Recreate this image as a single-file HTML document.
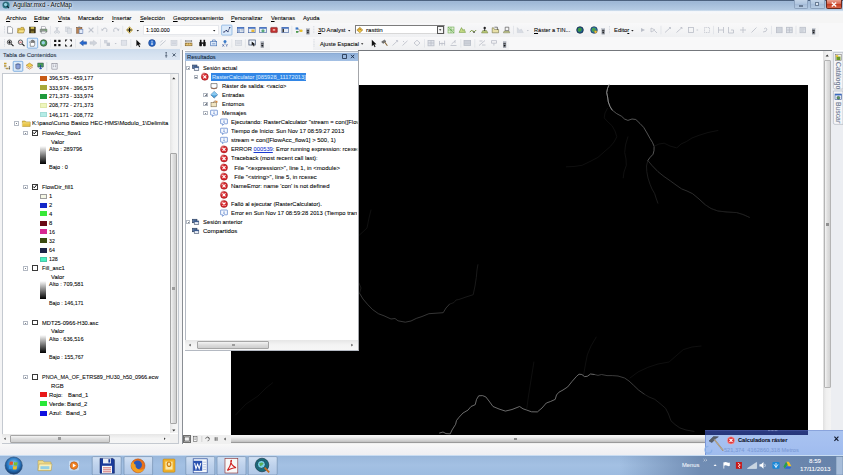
<!DOCTYPE html>
<html>
<head>
<meta charset="utf-8">
<title>Aguilar.mxd - ArcMap</title>
<style>
html,body{margin:0;padding:0;}
body{width:843px;height:475px;overflow:hidden;position:relative;background:#f0f0f0;font-family:"Liberation Sans",sans-serif;font-size:6.2px;color:#000;}
.a{position:absolute;}
.t{position:absolute;white-space:nowrap;line-height:8px;height:8px;letter-spacing:0;-webkit-text-stroke:0.07px currentColor;}
.g{color:#9aa0a8;}
u{text-decoration:underline;text-decoration-thickness:0.45px;text-underline-offset:0.5px;}
svg{position:absolute;overflow:visible;}
.sw{position:absolute;width:7.5px;height:5px;}
.cb{position:absolute;width:5.6px;height:5.5px;border:0.6px solid #3a3a3a;background:#fff;box-sizing:border-box;}
.ex{position:absolute;width:4.6px;height:4.6px;border:0.6px solid #b4bac4;background:#fff;box-sizing:border-box;}
.ex:after{content:"";position:absolute;left:0.7px;right:0.7px;top:1.4px;height:0.6px;background:#7a8088;}
.ex.pl:before{content:"";position:absolute;top:0.7px;bottom:0.7px;left:1.4px;width:0.6px;background:#7a8088;}
.gr{position:absolute;width:6px;background:linear-gradient(#fff,#000);}
</style>
</head>
<body>

<!-- ===== TITLE BAR ===== -->
<div class="a" id="titlebar" style="left:0;top:0;width:843px;height:11px;background:linear-gradient(#4a5f7c 0,#4d6380 6%,#a6bdd9 10%,#9db7d5 16%,#b6cce4 92%,#e4edf6 100%);"></div>
<div class="t" id="title" style="transform-origin:0 50%;transform:scaleX(0.941);left:13px;top:1px;font-size:6.6px;color:#0c1420;text-shadow:0 0 1.5px rgba(255,255,255,.95),0 0 3px rgba(255,255,255,.8),0 0 4px rgba(255,255,255,.6);">Aguilar.mxd - ArcMap</div>

<!-- ===== MENU BAR ===== -->
<div class="a" id="menubar" style="left:0;top:11px;width:843px;height:12px;background:linear-gradient(#f1f5fa 0,#f7f8fa 12%,#f5f5f5 30%,#f5f5f5 100%);"></div>


<!-- menu items -->
<div class="t" id="m1" style="transform-origin:0 50%;transform:scaleX(0.993);left:6.2px;top:13.5px;"><u>A</u>rchivo</div>
<div class="t" id="m2" style="transform-origin:0 50%;transform:scaleX(0.964);left:34.4px;top:13.5px;"><u>E</u>ditar</div>
<div class="t" id="m3" style="transform-origin:0 50%;transform:scaleX(0.894);left:57.8px;top:13.5px;"><u>V</u>ista</div>
<div class="t" id="m4" style="transform-origin:0 50%;transform:scaleX(0.972);left:78.2px;top:13.5px;">Marcador</div>
<div class="t" id="m5" style="transform-origin:0 50%;transform:scaleX(0.929);left:112px;top:13.5px;"><u>I</u>nsertar</div>
<div class="t" id="m6" style="transform-origin:0 50%;transform:scaleX(0.928);left:139.5px;top:13.5px;"><u>S</u>elección</div>
<div class="t" id="m7" style="transform-origin:0 50%;transform:scaleX(0.964);left:172.6px;top:13.5px;"><u>G</u>eoprocesamiento</div>
<div class="t" id="m8" style="transform-origin:0 50%;transform:scaleX(0.910);left:231px;top:13.5px;"><u>P</u>ersonalizar</div>
<div class="t" id="m9" style="transform-origin:0 50%;transform:scaleX(0.937);left:270.5px;top:13.5px;"><u>V</u>entanas</div>
<div class="t" id="m10" style="transform-origin:0 50%;transform:scaleX(0.952);left:303px;top:13.5px;">Ayuda</div>

<!-- window buttons -->
<div class="a" style="left:793.5px;top:0;width:14.5px;height:8.5px;border:0.6px solid #8da3bf;border-top:0;border-radius:0 0 2px 2px;box-sizing:border-box;background:linear-gradient(#c4d5e9,#afc5df 50%,#a3bbd8 51%,#b8cce3);"></div>
<div class="a" style="left:798.5px;top:4.6px;width:4.5px;height:1.6px;background:#f4f8fc;border:0.4px solid #6a7d96;box-sizing:border-box;"></div>
<div class="a" style="left:809.5px;top:0;width:15px;height:8.5px;border:0.6px solid #8da3bf;border-top:0;border-radius:0 0 2px 2px;box-sizing:border-box;background:linear-gradient(#c4d5e9,#afc5df 50%,#a3bbd8 51%,#b8cce3);"></div>
<div class="a" style="left:814.5px;top:2.2px;width:4.6px;height:3.8px;border:0.7px solid #6a7d96;box-sizing:border-box;background:rgba(255,255,255,.6);"></div>
<div class="a" style="left:825.5px;top:0;width:16.5px;height:8.5px;border:0.6px solid #6a2a20;border-top:0;border-radius:0 0 2px 2px;box-sizing:border-box;background:linear-gradient(#e8a393,#d7614a 50%,#c43a20 51%,#d9674a);"></div>
<svg style="left:831px;top:1.8px;" width="6" height="5" viewBox="0 0 6 5"><path d="M0.8 0.5 L5.2 4.5 M5.2 0.5 L0.8 4.5" stroke="#fff" stroke-width="1.3"/></svg>
<!-- app icon -->
<svg style="left:1.5px;top:1.2px;" width="8" height="8" viewBox="0 0 8 8"><circle cx="4" cy="4" r="3.6" fill="#2f7d8c"/><circle cx="3.6" cy="3.6" r="2.1" fill="#8fd0e0" stroke="#134" stroke-width="0.6"/><path d="M5 5 L7 7.2" stroke="#123" stroke-width="1.1"/></svg>

<!-- ===== TOOLBARS ===== -->
<div class="a" id="toolbars" style="left:0;top:23px;width:843px;height:27px;background:#f8f8f9;"></div>


<!-- toolbar subtle bands -->
<div class="a" style="left:0;top:23px;width:612px;height:14px;background:linear-gradient(#f8f8f9,#eff0f2);"></div>
<div class="a" style="left:609px;top:24px;width:210px;height:12.5px;background:linear-gradient(#f8f8f9,#eff0f2);border-radius:1.5px;"></div>
<div class="a" style="left:0;top:37px;width:270px;height:13px;background:linear-gradient(#f8f8f9,#eff0f2);"></div>
<div class="a" style="left:313px;top:37px;width:196px;height:13px;background:linear-gradient(#f8f8f9,#eff0f2);"></div>
<div class="a" style="left:358px;top:49.8px;width:473.5px;height:0.95px;background:#74777c;z-index:3;"></div>

<!-- combos -->
<div class="a" style="left:142.5px;top:25.3px;width:76px;height:9.6px;background:#fff;border:0.5px solid #e6e8ec;box-sizing:border-box;"></div>
<div class="t" id="scaletxt" style="transform-origin:0 50%;transform:scaleX(0.861);left:145.7px;top:26.3px;">1:100.000</div>
<div class="a" style="left:355px;top:24.6px;width:89.6px;height:9.8px;background:#fff;border:0.8px solid #7c7c7c;border-right-color:#d8d8d8;border-bottom-color:#d8d8d8;box-sizing:border-box;"></div>
<div class="a" style="left:436.8px;top:25.6px;width:6.8px;height:8px;background:#f4f4f4;border:0.6px solid #555;box-sizing:border-box;"></div>
<div class="t" id="rasttin" style="transform-origin:0 50%;transform:scaleX(0.997);left:366.2px;top:26.3px;">rasttin</div>
<div class="t" id="an3d" style="transform-origin:0 50%;transform:scaleX(0.926);left:318.3px;top:26.3px;"><u>3</u>D Analyst</div>
<div class="t" id="rtin" style="transform-origin:0 50%;transform:scaleX(0.902);left:533.8px;top:26.3px;"><u>R</u>áster a TIN...</div>
<div class="t" id="editor" style="transform-origin:0 50%;transform:scaleX(0.946);left:613.5px;top:26.3px;">Edito<u>r</u></div>
<div class="t" id="ajuste" style="transform-origin:0 50%;transform:scaleX(0.922);left:320.3px;top:39.6px;">Ajuste Espacial</div>

<svg id="tbsvg" style="left:0;top:0;" width="843" height="475" viewBox="0 0 843 475">
<defs>
<g id="ovf"><rect x="-1.6" y="-3" width="3.2" height="6.4" fill="#8a8f98"/><rect x="-1.6" y="-3" width="3.2" height="1.2" fill="#c8ccd4"/><path d="M-1.1 0.8 L1.1 0.8 L0 2.4 Z" fill="#111"/><rect x="-1.1" y="-0.8" width="2.2" height="0.6" fill="#111"/></g>
<g id="dd"><path d="M-1.2 -0.6 L1.2 -0.6 L0 0.9 Z" fill="#222"/></g>
<g id="grip"><path d="M0 -4 V4" stroke="#c6ccd6" stroke-width="0.8" stroke-dasharray="0.8 0.8"/></g>
<g id="sep"><path d="M0 -4.2 V4.2" stroke="#d9dce2" stroke-width="0.6"/></g>
<g id="mag"><circle cx="-0.8" cy="-0.8" r="2.2" fill="#f6f8fb" stroke="#333" stroke-width="0.8"/><path d="M0.9 0.9 L3.2 3.2" stroke="#222" stroke-width="1.2"/></g>
<g id="globe"><circle r="3.3" fill="#1f5f9a" stroke="#0a1a2a" stroke-width="0.7"/><path d="M-2 -1.5 Q0 -3 1.5 -1.5 Q2.5 0.5 0.5 1.5 Q-1.5 2.5 -2.2 0.5 Z" fill="#3f9a3f"/></g>
<g id="gray1"><rect x="-2.8" y="-2.8" width="5.6" height="5.6" fill="#d4d8e0" stroke="#bcc2cc" stroke-width="0.5"/></g>
<g id="gray2"><path d="M-2.8 2.5 L2.8 -2.5 M-2.8 -0.5 L-0.5 -2.8" stroke="#c0c5ce" stroke-width="0.9" fill="none"/></g>
<g id="win"><rect x="-3.3" y="-2.7" width="6.6" height="5.4" fill="#e8eef8" stroke="#3a5a9a" stroke-width="0.6"/><rect x="-3.3" y="-2.7" width="6.6" height="1.4" fill="#3a6ac0"/></g>
</defs>

<!-- ROW 1 -->
<use href="#grip" x="4.5" y="30"/>
<g transform="translate(10,30)"><path d="M-2.4 -3.3 H1 L2.5 -1.8 V3.3 H-2.4 Z" fill="#fff" stroke="#6a6f78" stroke-width="0.6"/></g>
<g transform="translate(21,30)"><path d="M-3.3 -1.6 H-0.6 L0 -2.6 H2.6 V-1.2 H3.4 L2.6 2.8 H-3.3 Z" fill="#e9c84c" stroke="#8b6d18" stroke-width="0.5"/><path d="M-3.3 2.8 L-2.2 -0.2 H3.6 L2.6 2.8 Z" fill="#f7e28a" stroke="#8b6d18" stroke-width="0.4"/></g>
<g transform="translate(32.4,30)"><rect x="-3" y="-3" width="6" height="6" fill="#3d3210" stroke="#221b05" stroke-width="0.4"/><rect x="-1.8" y="-3" width="3.6" height="2.2" fill="#c9b44a"/><rect x="-1.6" y="0.6" width="3.2" height="2.4" fill="#7a6a28"/></g>
<g transform="translate(43.6,30)"><rect x="-2" y="-3.2" width="4" height="2.6" fill="#fff" stroke="#667" stroke-width="0.4"/><rect x="-3.4" y="-1" width="6.8" height="3.2" rx="0.6" fill="#8d9b8e" stroke="#4a564c" stroke-width="0.4"/><rect x="-2.2" y="1.2" width="4.4" height="2" fill="#e8ece8" stroke="#667" stroke-width="0.3"/><circle cx="2.2" cy="0" r="0.5" fill="#4c4"/></g>
<use href="#sep" x="50.5" y="30"/>
<g transform="translate(57,30)" stroke="#c2c7d0" stroke-width="0.9" fill="none"><path d="M-1.2 -3 L1 1 M1.2 -3 L-1 1"/><circle cx="-1.5" cy="2.2" r="1"/><circle cx="1.5" cy="2.2" r="1"/></g>
<g transform="translate(68.5,30)"><rect x="-2.8" y="-3" width="3.8" height="4.6" fill="#dde0e6" stroke="#c2c7d0" stroke-width="0.5"/><rect x="-0.8" y="-1.4" width="3.8" height="4.6" fill="#dde0e6" stroke="#c2c7d0" stroke-width="0.5"/></g>
<g transform="translate(79.7,30)"><rect x="-3" y="-2.6" width="5.2" height="5.8" fill="#b98252" stroke="#6e4524" stroke-width="0.5"/><rect x="-1.4" y="-3.4" width="2" height="1.4" fill="#7b7f88"/><rect x="-0.6" y="-0.8" width="3.8" height="4.2" fill="#e4ecfa" stroke="#4a6fb0" stroke-width="0.5"/></g>
<g transform="translate(91,30)"><path d="M-2.4 -2.4 L2.4 2.4 M2.4 -2.4 L-2.4 2.4" stroke="#bfc4cd" stroke-width="1.2"/></g>
<use href="#sep" x="97.7" y="30"/>
<g transform="translate(104.6,30)"><path d="M-2.4 0 Q-1 -2.8 1.4 -1.8 Q3 -0.6 2 2" fill="none" stroke="#c2c7d0" stroke-width="1"/><path d="M-3.4 -1.6 L-2.8 1.2 L-0.6 -0.2 Z" fill="#c2c7d0"/></g>
<g transform="translate(116,30)"><path d="M2.4 0 Q1 -2.8 -1.4 -1.8 Q-3 -0.6 -2 2" fill="none" stroke="#c2c7d0" stroke-width="1"/><path d="M3.4 -1.6 L2.8 1.2 L0.6 -0.2 Z" fill="#c2c7d0"/></g>
<use href="#sep" x="122.7" y="30"/>
<g transform="translate(129.5,30)"><path d="M0 -3.4 L3.4 0 L0 3.4 L-3.4 0 Z" fill="#f6e08a" stroke="#b89a40" stroke-width="0.5"/><path d="M0 -2.3 V2.3 M-2.3 0 H2.3" stroke="#111" stroke-width="1.15"/></g>
<use href="#dd" x="137.8" y="30.5"/>
<use href="#dd" x="214.2" y="30.5"/>
<!-- editor-toolbar toggle (highlighted) -->
<rect x="221.6" y="25.1" width="10.4" height="10" rx="0.8" fill="#dbeafa" stroke="#6aa0d8" stroke-width="0.6"/>
<g transform="translate(226.8,30)"><path d="M-3 2 L-0.5 0.5 L1 1.5 L3 -2.4" stroke="#334" stroke-width="0.6" fill="none"/><g fill="#1a2a6a"><rect x="-3.4" y="1.5" width="1.1" height="1.1"/><rect x="-1" y="0" width="1.1" height="1.1"/><rect x="0.6" y="1" width="1.1" height="1.1"/><rect x="2.4" y="-3" width="1.1" height="1.1"/></g></g>
<use href="#win" x="240.6" y="30"/><g transform="translate(240.6,30)"><rect x="-2.6" y="-0.8" width="2" height="2.8" fill="#9ab4dc"/><path d="M0 -0.4 H2.6 M0 0.8 H2.6" stroke="#7a8aa0" stroke-width="0.4"/></g>
<use href="#win" x="251.8" y="30"/><g transform="translate(251.8,30)"><rect x="-0.4" y="-0.4" width="3" height="2.4" fill="#e8b838"/></g>
<use href="#win" x="263" y="30"/><g transform="translate(263,30)"><circle cx="0" cy="0.8" r="1.6" fill="#58a878"/></g>
<g transform="translate(274,30)"><rect x="-3.3" y="-2.6" width="6.6" height="5.2" rx="0.6" fill="#c23030" stroke="#6a1010" stroke-width="0.5"/><rect x="-1.2" y="-0.8" width="2.4" height="1.4" fill="#f0d0c0"/></g>
<use href="#win" x="285.2" y="30"/><g transform="translate(285.2,30)"><rect x="-2.7" y="-1.2" width="1.4" height="3.4" fill="#222"/></g>
<use href="#sep" x="291.8" y="30"/>
<g transform="translate(299,30)"><rect x="-3.4" y="-2.6" width="2.6" height="2.2" fill="#3a78c8"/><rect x="0.6" y="-0.4" width="3" height="2.4" rx="1" fill="#e8c030"/><rect x="-3" y="1" width="2.2" height="1.8" fill="#4a9a4a"/><path d="M-0.8 -1.5 L0.6 0.4 M-0.8 1.8 L0.6 1" stroke="#234" stroke-width="0.5"/></g>
<use href="#ovf" x="307.9" y="31"/>
<use href="#grip" x="313.8" y="30"/>
<use href="#dd" x="349.2" y="30.5"/>
<g transform="translate(359.8,30)"><path d="M0 -2.8 L3 0 L0 2.8 L-3 0 Z" fill="#f0c848" stroke="#8a6410" stroke-width="0.5"/><path d="M-1.6 0.4 L0 -1.4 L1.6 0.4" stroke="#8a4a10" stroke-width="0.6" fill="none"/></g>
<use href="#dd" x="440.2" y="29.8"/>
<g transform="translate(451,30)"><rect x="-3" y="-3" width="6" height="6" fill="#dff0d0" stroke="#5a9a3a" stroke-width="0.5"/><path d="M-3 0 H3 M0 -3 V3 M-3 -3 L3 3" stroke="#4a9a3a" stroke-width="0.5"/></g>
<g transform="translate(462.3,30)"><path d="M-3.2 2.4 L-0.8 -2.4 L0.8 0.6 L1.8 -0.8 L3.2 2.4 Z" fill="#c8dc88" stroke="#5a8a2a" stroke-width="0.5"/></g>
<g transform="translate(473,30.6)"><path d="M-3.2 1.6 Q-1.6 -1.4 0 0.6 Q1.6 2 3.2 -0.6" fill="none" stroke="#6a8a2a" stroke-width="0.9"/><circle cx="1" cy="1.6" r="0.8" fill="#333"/></g>
<g transform="translate(484.7,30)"><path d="M-3.2 3 H3.2 L2 0.6 H-2 Z" fill="#b8c878" stroke="#5a6a2a" stroke-width="0.4"/><circle cx="0" cy="-2" r="1.2" fill="#222"/><path d="M0 -1 V1" stroke="#222" stroke-width="0.8"/></g>
<g transform="translate(495.4,30)"><path d="M-3.2 2.8 H3.2 L3.2 -0.6 H-1 L-1.8 -2.2 H-3.2 Z" fill="#e8e0a8" stroke="#5a5a2a" stroke-width="0.5"/><path d="M-1 -2.8 H2 V0" stroke="#333" stroke-width="0.6" fill="none"/></g>
<g transform="translate(506.6,30)"><path d="M-3.2 2.8 H3.2 L2.4 1 H-2.4 Z" fill="#c8d098" stroke="#5a5a2a" stroke-width="0.4"/><path d="M-1.4 -2.8 H2.2 V0.6 H-1.4 Z" fill="#f4f4f4" stroke="#444" stroke-width="0.6"/></g>
<use href="#sep" x="513.5" y="30"/>
<g transform="translate(520.3,30)"><path d="M-3 2.6 V-2.4 L-0.6 0.2 L1 -1 L3 2.6 Z" fill="#d8dce4" stroke="#c2c7d0" stroke-width="0.4"/></g>
<g transform="translate(527.8,30.5)"><path d="M-1 -0.5 L1 -0.5 L0 0.8 Z" fill="#b8bdc6"/></g>
<use href="#globe" x="580" y="30"/>
<g transform="translate(594,30)"><circle r="3.3" fill="#2a78b8" stroke="#0a1a2a" stroke-width="0.6"/><path d="M-2 -1.5 Q0 -3 1.5 -1.5 Q2.5 0.5 0.5 1.5 Q-1.5 2.5 -2.2 0.5 Z" fill="#4aa04a"/><circle cx="1.6" cy="1.8" r="1.4" fill="#f0c030" stroke="#654" stroke-width="0.3"/></g>
<use href="#ovf" x="603.2" y="31"/>
<use href="#dd" x="632.4" y="30.5"/>
<g stroke="#babec8" fill="none" stroke-width="0.8">
<path d="M641 28 L645 30 L641 32 Z" fill="#babec8" stroke="none"/>
<path d="M651 28 L655 30 L651 32 Z M655 31 L657 33" />
<path d="M665 32.5 L670.5 27.5 M669 27.5 h1.5 v1.5"/>
<path d="M676.5 32.5 L682 27.5 M680.5 27.5 h1.5 v1.5"/>
<rect x="688.5" y="27.5" width="5" height="5"/><path d="M696.5 30 h1.6"/>
<rect x="704.5" y="27.5" width="5" height="5" stroke-dasharray="1 0.8"/>
<path d="M718.5 27 v6 M723.5 27 v6 M718.5 30 h5"/>
<path d="M728.5 27 v6 h5 v-3 h-2.5"/>
<path d="M740 30 h6 M743 27 v6"/>
<path d="M751.5 32.5 L756.5 27.5"/>
<path d="M763 32 q4 0 4 -3 q-1 -2 -3 0"/>
<rect x="776.5" y="27.3" width="5.6" height="5.4" fill="#dde1e8"/><path d="M776.5 29 h5.6 M776.5 31 h5.6"/>
<rect x="786.6" y="27.3" width="5.6" height="5.4" fill="#dde1e8"/><path d="M789.4 27.3 v5.4 M786.6 30 h5.6"/>
<rect x="800" y="27.3" width="5.6" height="5.4" fill="#dde1e8"/><path d="M801 29 h3.6 M801 31 h2.6"/>
</g>
<use href="#sep" x="661" y="30"/><use href="#sep" x="713.5" y="30"/><use href="#sep" x="771.5" y="30"/><use href="#sep" x="796" y="30"/>
<use href="#ovf" x="813.6" y="31"/>
<use href="#grip" x="609.5" y="30"/>

<!-- ROW 2 -->
<use href="#grip" x="4.5" y="43.3"/>
<use href="#mag" x="10.3" y="43"/><path d="M8 42.2 h3 M9.5 40.7 v3" stroke="#111" stroke-width="0.9"/>
<use href="#mag" x="21.3" y="43"/><path d="M19.3 42.2 h2.4" stroke="#b22" stroke-width="0.8"/>
<rect x="27.3" y="38.2" width="10.4" height="10" rx="0.8" fill="#e4effb" stroke="#5a98d8" stroke-width="0.7"/>
<g transform="translate(32.5,43.3)"><path d="M-2.2 3 V0 L-3 -1.4 L-2.2 -1.8 L-1.2 -0.4 V-2.8 H-0.4 V-0.6 V-3.2 H0.5 V-0.6 V-2.8 H1.4 V-0.4 V-2 H2.2 V1.4 L1.6 3 Z" fill="#fff" stroke="#444" stroke-width="0.5"/></g>
<g transform="translate(43.6,43)"><circle r="3.3" fill="#4a9a5a" stroke="#1a3a2a" stroke-width="0.6"/><circle r="1.7" cx="-0.3" cy="-0.3" fill="#9ad0e8"/></g>
<use href="#sep" x="50.5" y="43.3"/>
<g transform="translate(57.3,43)" fill="#111"><rect x="-3.2" y="-3.2" width="2.2" height="2.2"/><rect x="1" y="-3.2" width="2.2" height="2.2"/><rect x="-3.2" y="1" width="2.2" height="2.2"/><rect x="1" y="1" width="2.2" height="2.2"/></g>
<g transform="translate(68.5,43)" fill="#111"><path d="M-3.4 -3.4 h2.4 l-2.4 2.4 Z M3.4 -3.4 v2.4 l-2.4 -2.4 Z M-3.4 3.4 v-2.4 l2.4 2.4 Z M3.4 3.4 h-2.4 l2.4 -2.4 Z"/></g>
<use href="#sep" x="75.5" y="43.3"/>
<path d="M79.6 43 L83.2 40.2 V41.8 H86.6 V44.2 H83.2 V45.8 Z" fill="#2a6ad0" stroke="#103a80" stroke-width="0.4"/>
<path d="M97 43 L93.4 40.2 V41.8 H90 V44.2 H93.4 V45.8 Z" fill="#d0d4dc" stroke="#b8bdc6" stroke-width="0.4"/>
<use href="#sep" x="100.5" y="43.3"/>
<g transform="translate(107,43)"><rect x="-3" y="-3" width="3.4" height="3.4" fill="#d0d4dc"/><rect x="-0.4" y="-0.4" width="3.4" height="3.4" fill="#c2c7d0"/></g>
<g transform="translate(115.7,43.5)"><path d="M-1 -0.5 L1 -0.5 L0 0.8 Z" fill="#b8bdc6"/></g>
<g transform="translate(124,43)"><rect x="-2.8" y="-2.8" width="5.6" height="5" fill="#e0e3ea" stroke="#c2c7d0" stroke-width="0.5"/></g>
<use href="#sep" x="130.8" y="43.3"/>
<path d="M136.4 39.8 V46.2 L138 44.8 L139.2 47.2 L140.2 46.7 L139 44.4 L141 44.2 Z" fill="#111"/>
<g transform="translate(152,43)"><circle r="3.4" fill="#2a6ac8" stroke="#0a2a70" stroke-width="0.5"/><path d="M0 -0.6 V2 M0 -2.2 v0.9" stroke="#fff" stroke-width="1.1"/></g>
<use href="#gray2" x="163" y="43"/>
<g transform="translate(174,43)"><rect x="-3" y="-2.6" width="6" height="5.2" fill="#dde1e8" stroke="#c2c7d0" stroke-width="0.5"/><path d="M-2 -1 h4 M-2 0.6 h4" stroke="#c2c7d0" stroke-width="0.5"/></g>
<use href="#sep" x="181" y="43.3"/>
<g transform="translate(188.6,43)"><rect x="-3.4" y="0" width="6.8" height="2.8" fill="#e8c878" stroke="#6a4a10" stroke-width="0.5"/><path d="M-2 0 v1.2 M0 0 v1.6 M2 0 v1.2" stroke="#6a4a10" stroke-width="0.4"/><path d="M-3 -2 h6" stroke="#222" stroke-width="0.6"/><path d="M-3 -2.8 v1.6 M3 -2.8 v1.6" stroke="#222" stroke-width="0.5"/></g>
<g transform="translate(202.5,43)" fill="#111"><rect x="-3.2" y="-1" width="2.6" height="4.2" rx="0.6"/><rect x="0.6" y="-1" width="2.6" height="4.2" rx="0.6"/><rect x="-2.6" y="-3.2" width="1.6" height="2.4"/><rect x="1" y="-3.2" width="1.6" height="2.4"/><rect x="-0.8" y="-0.6" width="1.6" height="1.4"/></g>
<g transform="translate(213.7,43)"><rect x="-3" y="-1.4" width="6" height="4.2" fill="#dce8f8" stroke="#3a6ab0" stroke-width="0.6"/><path d="M-1.2 -1.4 V-3 H1.6 V-1.4" fill="none" stroke="#3a6ab0" stroke-width="0.6"/><path d="M-1.6 0.8 h3.2" stroke="#3a6ab0" stroke-width="0.6"/></g>
<g transform="translate(225,43)"><circle cx="0" cy="-1.6" r="1.5" fill="#3a7ac8"/><path d="M0 -0.4 V1" stroke="#3a7ac8" stroke-width="0.7"/><path d="M-2.6 1.2 l1.8 2.4 M-0.8 1.2 l-1.8 2.4 M0.8 1.2 l0.9 1.2 l0.9 -1.2 M1.7 2.4 v1.2" stroke="#1a3a8a" stroke-width="0.55" fill="none"/></g>
<use href="#sep" x="231.8" y="43.3"/>
<g transform="translate(238.6,43)"><rect x="-3.2" y="-2.6" width="6.4" height="5.2" fill="#e2e5eb" stroke="#c2c7d0" stroke-width="0.5"/><path d="M-2 -1 h4 M-2 0.4 h4" stroke="#c8ccd4" stroke-width="0.5"/></g>
<use href="#sep" x="245.4" y="43.3"/>
<g transform="translate(252.3,43)"><rect x="-3.4" y="-3" width="6.4" height="5" fill="#eef4fc" stroke="#3a4a6a" stroke-width="0.7"/><path d="M-0.6 -1.6 V2.6 L0.6 1.6 L1.4 3.4 L2.2 3 L1.4 1.4 L2.8 1.2 Z" fill="#111"/></g>
<use href="#ovf" x="262.3" y="44.3"/>
<use href="#grip" x="314" y="43.3"/>
<use href="#dd" x="362.2" y="43.8"/>
<path d="M371.8 39.8 V46.2 L373.4 44.8 L374.6 47.2 L375.6 46.7 L374.4 44.4 L376.4 44.2 Z" fill="#111"/>
<g transform="translate(384.4,43)"><path d="M-2.8 -1.2 L0.2 -3 L1.6 -1.6 L-1.4 0.4 Z" fill="#777" stroke="#333" stroke-width="0.4"/><path d="M0.4 -0.8 L3 2.8" stroke="#8a6a3a" stroke-width="1.1"/></g>
<g stroke="#babec8" fill="none" stroke-width="0.8">
<path d="M392.5 45.5 L397.5 40.8"/><path d="M396 40.5 h1.6 v1.6"/>
<path d="M402.5 45.5 L407.5 40.8 M403 41 l1.2 1.2"/>
<path d="M414 43 l3 -2.8 l3 2.8 l-3 2.8 Z"/>
<use href="#sep" x="424.5" y="43.3"/>
<rect x="428" y="40.4" width="6" height="5.4" fill="#e0e3ea"/><path d="M431 40.4 v5.4 M428 43 h6"/>
<path d="M439.5 45.6 v-4.6 M442 45.6 v-3 M444.6 45.6 v-5"/><path d="M439 43.5 h6"/>
<path d="M450.5 45.5 h6 M451.5 44 l4 -3.5 M455 40.5 v2.6"/>
<use href="#sep" x="460.8" y="43.3"/>
<rect x="464" y="40.4" width="6.6" height="5" fill="#d6dae2"/><path d="M464 42 h6.6 M464 43.8 h6.6"/>
<use href="#sep" x="474.8" y="43.3"/>
<path d="M479 45.5 l6 -5 M479.5 41 h3 M482 45 h3.5"/>
<path d="M491.5 40.6 h5 v2.6 h-2.6 v2.4 M491.5 40.6 v2.6 h2.4"/>
</g>
<use href="#ovf" x="504.6" y="44.3"/>
</svg>

<!-- ===== MAIN AREA BG ===== -->
<div class="a" id="mainbg" style="left:0;top:50px;width:843px;height:394px;background:#fff;"></div>

<!-- ===== MAP ===== -->
<div class="a" id="mapblack1" style="left:231px;top:85px;width:577px;height:350px;background:#000;"></div>


<!-- streams -->
<svg style="left:0;top:0" width="843" height="475" viewBox="0 0 843 475" fill="none" stroke-linejoin="round" stroke-linecap="round">
<g stroke-width="0.75">
<path d="M609 85 L607.5 88.5 L606.7 92.6 L607.6 97 L608.3 102 L610 106.5 L612.1 110 L616.5 113.5 L621.6 116.3 L624.5 119 L627.9 120.4 L632 119 L635.8 119.5 L640 123.5 L643.7 127.4 L647 133 L650 138.4 L652.5 142.5 L654.1 146.3 L654 150.5 L653.1 154.2 L650 157.5 L647.8 160.5" stroke="#707070"/>
<path d="M609 85 L607.5 88.5 L606.7 92.6 L607.6 97 L608.3 102 L610 106.5 L612.1 110" stroke="#9a9a9a"/>
<path d="M647.8 160.5 L652 165.5 L657.9 171.6 L664 176.5 L670.5 181 L676 185 L681.6 188.9 L687 191 L692.6 193.7 L699 199 L705.2 204.7 L711 208.5 L717.9 211 L727 212 L736.8 212.6 L743 214.5 L749.5 217.4" stroke="#3c3c3c"/>
<path d="M705.2 204.7 L711 208.5 L717.9 211 L727 212 L736.8 212.6 L743 214.5 L749.5 217.4" stroke="#000" opacity="0.45"/>
<path d="M654 146.3 L659 144 L664.2 143.2 L670 146 L676.8 147.9 L681 144 L686.3 141.6 L692 138 L699 135.3 L708 132.5 L717.9 130.5" stroke="#161616"/>
<path d="M647.8 160.5 L646.5 166 L646.8 171.6 L648 178 L650 184.2 L652 189 L654.7 193.7 L656 198 L657.9 203.2" stroke="#242424"/>
<path d="M607.4 108.4 L605 113 L604.2 117.9 L608 122 L612.1 125.8 L615 131 L616.8 136.8 L614 142 L610.5 146.3 L604 152 L597.9 157.4 L590 161.5 L582.1 165.3 L574 166.5 L566.3 166.8" stroke="#141414"/>
<path d="M627.9 136.8 L625.5 145 L624.7 152.6 L626 159 L626.3 165.3 L624 172 L623.2 177.9" stroke="#161616"/>
<!-- left-mid stream -->
<path d="M359.5 293.2 L363 299 L367.4 304.2 L372.5 309.5 L378.4 313.7 L384 315.8 L391 319 L395 318.5 L398 320.8 L405.3 322.2 L411 321 L416.3 318.4 L422 316.5 L428.9 313.7 L436 313.2 L443.2 312.7 L446 308 L449.5 304.2" stroke="#484848"/>
<path d="M449.5 304.2 L454 302.5 L456 300 L458.9 299.5 L466 297 L473.2 294.7 L475 286 L476.3 277.4 L477 270 L477.9 264.7" stroke="#222222"/>
<path d="M359.5 235 L367 228 L369 218 L371 210" stroke="#161616"/>
<path d="M359 283 L361 288 L359.5 293.2" stroke="#242424"/>
<path d="M235.5 415 L246 404 L258 396 L266 388 L272.6 382.8" stroke="#121212"/>
<!-- bottom stream -->
<path d="M439.6 433 L443 432 L446 433.6 L450.2 433.9 L452 430 L455.6 424.3 L456.5 420.5 L459.1 417.2 L463 413 L468 410.1 L471 406.5 L475.2 404.7 L476.5 399.5 L478.7 395.8 L482.5 395.6 L485.8 396.9 L489 401 L493 406.5 L499 409 L505.4 411.1 L512 409.5 L519.6 406.5 L523 408.8 L526.8 410.1 L531.5 411.8 L537.4 411.9 L542 408 L546.3 403 L550.5 401.5 L555.2 399.4 L556.5 395 L558.8 392.3 L563 390 L567.7 386.9 L572 381.5 L576.6 376.3 L579 374.2 L581.9 374.5 L584.5 376.6 L587.3 376.3 L590.5 374 L594.4 374.5" stroke="#8e8e8e"/>
<path d="M594.4 374.5 L598 375.4 L601.5 374.5 L607 375.6 L612.2 375.6 L618 376 L624.6 378 L629 381 L633.5 385.2 L638.5 390 L644.2 394.1" stroke="#505050"/>
<path d="M644.2 394.1 L649 397 L654.9 399.4 L660 403.5 L665.6 408.3 L668.5 414 L670.9 420.7 L675 424.5 L679.8 427.9 L686 430 L694 431.4" stroke="#242424"/>
<path d="M630 378 L638 372 L647.8 367.4 L658 364 L669.1 362 L677 355 L683.3 349.6 L692 347 L701.1 346" stroke="#141414"/>
<path d="M526.8 408.3 L528.5 396 L531 380 L533.9 362" stroke="#141414"/>
<path d="M583.7 374.5 L585.5 364 L587.3 354.9 L591 346 L596.2 337.1" stroke="#141414"/>
</g>
</svg>

<!-- right dock -->
<div class="a" style="left:823.2px;top:51px;width:8px;height:384px;background:linear-gradient(90deg,#e0e0e0,#f0f0f0 40%,#f4f4f4);"></div>
<div class="a" style="left:831.2px;top:50.5px;width:11.8px;height:394px;background:#eceef2;"></div>
<div class="a" style="left:823.8px;top:59.5px;width:6.8px;height:328.5px;background:linear-gradient(90deg,#f4f4f4,#e0e0e0 45%,#d2d2d2);border:0.5px solid #b4b4b4;border-radius:1px;box-sizing:border-box;"></div>
<div class="a" style="left:825.8px;top:223.4px;width:2.8px;height:0.5px;background:#909090;box-shadow:0 1px 0 #909090,0 2px 0 #909090;"></div>
<svg style="left:0;top:0" width="843" height="475" viewBox="0 0 843 475">
<path d="M825.6 56.6 L828.8 56.6 L827.2 54.6 Z M825.6 430 L828.8 430 L827.2 432 Z" fill="#333"/>
<!-- catalog tab -->
<path d="M833.4 52.6 H843 V89 H835 Q833.4 89 833.4 87.4 Z" fill="#f4f5f8" stroke="#9aa2ae" stroke-width="0.5"/>
<path d="M833.4 91 H843 V124.4 H835 Q833.4 124.4 833.4 122.8 Z" fill="#f4f5f8" stroke="#9aa2ae" stroke-width="0.5"/>
<g transform="translate(838.2,57.6)"><rect x="-3" y="-3" width="6" height="6" fill="#f4f4e8" stroke="#666" stroke-width="0.5"/><rect x="-1.8" y="-1" width="4" height="3.4" fill="#6a9a2a"/><rect x="-2.4" y="-2.4" width="2.4" height="1.8" fill="#e8c030"/></g>
<g transform="translate(838.2,97)"><rect x="-3.2" y="-3" width="6.4" height="5.6" fill="#e8eef8" stroke="#3a5a9a" stroke-width="0.6"/><rect x="-3.2" y="-3" width="6.4" height="1.4" fill="#3a6ac0"/><circle cx="0.2" cy="0.8" r="1.5" fill="#5a9a5a" stroke="#234" stroke-width="0.4"/></g>
</svg>
<div class="t" id="cat" style="left:838.4px;top:61.6px;font-size:6.8px;transform-origin:0 0;transform:rotate(90deg) translate(0,-4px);color:#65718a;">Catálogo</div>
<div class="t" id="bus" style="left:838.4px;top:101.6px;font-size:6.8px;transform-origin:0 0;transform:rotate(90deg) translate(0,-4px);color:#65718a;">Buscar</div>

<!-- map bottom scrollbar + view buttons -->
<div class="a" style="left:184.5px;top:434.8px;width:639px;height:9px;background:#f0f0f0;"></div>
<div class="a" style="left:231px;top:434.8px;width:592px;height:8.4px;background:linear-gradient(#f8f8f8,#f0f0f0 30%,#d6d6d6 70%,#bebebe);border-bottom:0.5px solid #9a9a9a;box-sizing:border-box;"></div>
<div class="a" style="left:513.6px;top:437.6px;width:0.5px;height:2.8px;background:#8c8c8c;box-shadow:1px 0 0 #8c8c8c,2px 0 0 #8c8c8c;"></div>
<div class="a" style="left:182.8px;top:435px;width:8.4px;height:8.2px;background:#c2c2c2;border:0.5px solid #6e6e6e;box-sizing:border-box;"></div>
<svg style="left:0;top:0" width="843" height="475" viewBox="0 0 843 475">
<rect x="184.6" y="437" width="4.6" height="4" fill="#f0f0f0" stroke="#333" stroke-width="0.5"/>
<rect x="193.4" y="436.6" width="3.6" height="4.8" fill="#f8f8f8" stroke="#444" stroke-width="0.5"/><path d="M194.2 438 h2 M194.2 439.4 h2" stroke="#444" stroke-width="0.4"/>
<path d="M201.8 436 v6" stroke="#bbb" stroke-width="0.5"/>
<path d="M205.6 439 a1.9 1.9 0 1 1 1.9 1.9 M209.2 439 a1.9 1.9 0 0 0 -1.9 -1.9" fill="none" stroke="#444" stroke-width="0.6"/>
<path d="M215.2 437.2 v3.6 M217 437.2 v3.6" stroke="#333" stroke-width="0.8"/>
<path d="M225.6 437.6 L225.6 440.4 L224 439 Z" fill="#333"/>
</svg>

<!-- ===== TOC PANEL ===== -->
<div class="a" id="tocpanel" style="left:0;top:48.8px;width:182px;height:395.2px;background:#f4f4f5;"></div>


<!-- TOC header -->
<div class="a" style="left:0;top:48.8px;width:180px;height:11px;background:linear-gradient(#ccdbec,#d6e2f0 50%,#dde7f3);"></div>
<div class="t" id="tochdr" style="transform-origin:0 50%;transform:scaleX(0.947);left:2.6px;top:51.1px;color:#1e2f44;">Tabla de Contenidos</div>
<svg style="left:0;top:0" width="843" height="475" viewBox="0 0 843 475">
<!-- pin & close -->
<path d="M166.2 52.6 v3.2 M165 55.8 h2.4 M166.2 55.8 v2 M165.4 52.6 h1.6" stroke="#2a3a50" stroke-width="0.6" fill="none"/>
<path d="M172.6 53.4 l3 3 M175.6 53.4 l-3 3" stroke="#2a3a50" stroke-width="0.8"/>
<!-- toc toolbar icons -->
<g transform="translate(7,66)"><path d="M-3 -2.5 h2.5 M-3 0 h2.5 M-1 2.5 h2.5" stroke="#c8a030" stroke-width="1.4"/><path d="M-2 -2 V2.5 H1" stroke="#888" stroke-width="0.4" fill="none"/><circle cx="2.4" cy="1" r="0.7" fill="#555"/><circle cx="2.4" cy="2.8" r="0.7" fill="#555"/></g>
<rect x="13.2" y="61.3" width="9.6" height="10" rx="0.8" fill="#dbeafa" stroke="#5a98d8" stroke-width="0.7"/>
<g transform="translate(18,66.3)"><ellipse cx="0" cy="-1.6" rx="2.2" ry="1" fill="#5a78c0" stroke="#223" stroke-width="0.4"/><path d="M-2.2 -1.6 V1.8 A2.2 1 0 0 0 2.2 1.8 V-1.6" fill="#8aa0d8" stroke="#223" stroke-width="0.4"/></g>
<g transform="translate(29.5,66.3)"><path d="M0 -3.2 L3.4 -1 L0 1.2 L-3.4 -1 Z" fill="#f0d050" stroke="#a06a10" stroke-width="0.5"/><path d="M-3.4 0.6 L0 2.8 L3.4 0.6" fill="none" stroke="#d08030" stroke-width="0.7"/></g>
<g transform="translate(40.6,66)"><rect x="-2.8" y="-3" width="5.6" height="4" fill="#4a9a5a" stroke="#234" stroke-width="0.4"/><path d="M0 -1 V3 M-1.6 1.6 L0 3.2 L1.6 1.6" stroke="#1a4aa0" stroke-width="0.9" fill="none"/></g>
<path d="M46.8 62 v8.6" stroke="#c3cad6" stroke-width="0.6"/>
<g transform="translate(54.5,66.3)"><rect x="-2.6" y="-2.8" width="5.2" height="5.6" fill="#f4f6fa" stroke="#667" stroke-width="0.5"/><path d="M-1.4 -1.2 h1 M-1.4 0.4 h1 M0.4 -1.2 h1.2 M0.4 0.4 h1.2" stroke="#556" stroke-width="0.5"/></g>
</svg>

<!-- TOC content box -->
<div class="a" id="tocbox" style="left:1.8px;top:73.2px;width:177px;height:370.6px;background:#fff;border:0.6px solid #c4c9d0;box-sizing:border-box;"></div>
<!-- toc v scrollbar -->
<div class="a" style="left:169.6px;top:73.8px;width:8.4px;height:359.4px;background:linear-gradient(90deg,#e4e4e4,#f2f2f2 40%,#f6f6f6);"></div>
<div class="a" style="left:170.2px;top:152.6px;width:7px;height:271px;background:linear-gradient(90deg,#f4f4f4,#dedede 45%,#cfcfcf);border:0.5px solid #a6a6a6;border-radius:1px;box-sizing:border-box;"></div>
<div class="a" style="left:172.3px;top:287px;width:2.8px;height:0.5px;background:#9c9c9c;box-shadow:0 1px 0 #9c9c9c,0 2px 0 #9c9c9c;"></div>
<svg style="left:0;top:0" width="843" height="475" viewBox="0 0 843 475"><path d="M172.2 79.2 L175.4 79.2 L173.8 77.2 Z M172.2 429.6 L175.4 429.6 L173.8 431.6 Z" fill="#333"/>
<!-- toc h scrollbar -->
<path d="M5.6 437.4 L5.6 440 L4 438.7 Z M164 437.4 L164 440 L165.6 438.7 Z" fill="#333"/></svg>
<div class="a" style="left:2.4px;top:434.4px;width:167.2px;height:8.8px;background:linear-gradient(#e6e6e6,#f4f4f4 50%,#f6f6f6);z-index:0;"></div>
<div class="a" style="left:10px;top:434.8px;width:99.6px;height:8px;background:linear-gradient(#f4f4f4,#dcdcdc 50%,#cecece);border:0.5px solid #a6a6a6;border-radius:1px;box-sizing:border-box;"></div>
<div class="a" style="left:58.3px;top:437.4px;width:0.5px;height:2.8px;background:#9c9c9c;box-shadow:1px 0 0 #9c9c9c,2px 0 0 #9c9c9c;"></div>
<svg style="left:0;top:0" width="843" height="475" viewBox="0 0 843 475"><path d="M5.6 437.4 L5.6 440 L4 438.7 Z M164 437.4 L164 440 L165.6 438.7 Z" fill="#333"/></svg>
<div class="a" style="left:169.6px;top:433.8px;width:8.4px;height:9.4px;background:#f0f0f0;"></div>
<div class="sw" style="left:39.8px;top:75.8px;background:#c85a14;border:0.4px solid #c85a14;box-sizing:border-box;"></div>
<div class="t" id="c0" style="transform-origin:0 50%;transform:scaleX(0.880);left:48.8px;top:74.4px;">396,575 - 459,177</div>
<div class="sw" style="left:39.8px;top:84.9px;background:#a8a838;border:0.4px solid #a8a838;box-sizing:border-box;"></div>
<div class="t" id="c1" style="transform-origin:0 50%;transform:scaleX(0.880);left:48.8px;top:83.5px;">333,974 - 396,575</div>
<div class="sw" style="left:39.8px;top:93.8px;background:#1f9a3c;border:0.4px solid #1f9a3c;box-sizing:border-box;"></div>
<div class="t" id="c2" style="transform-origin:0 50%;transform:scaleX(0.880);left:48.8px;top:92.4px;">271,373 - 333,974</div>
<div class="sw" style="left:39.8px;top:102.8px;background:#eef6bc;border:0.4px solid #dfe8a8;box-sizing:border-box;"></div>
<div class="t" id="c3" style="transform-origin:0 50%;transform:scaleX(0.880);left:48.8px;top:101.4px;">208,772 - 271,373</div>
<div class="sw" style="left:39.8px;top:111.9px;background:#b4ece6;border:0.4px solid #a2dcd6;box-sizing:border-box;"></div>
<div class="t" id="c4" style="transform-origin:0 50%;transform:scaleX(0.880);left:48.8px;top:110.5px;">146,171 - 208,772</div>
<div class="ex" style="left:14.2px;top:121.1px;"></div>
<svg style="left:21.8px;top:119.6px;" width="9" height="7" viewBox="0 0 9 7"><path d="M0.4 1 H3.2 L3.9 1.9 H8.2 V6.4 H0.4 Z" fill="#e9c64a" stroke="#9a7a1a" stroke-width="0.5"/><path d="M0.4 6.4 V2.9 H8.2" fill="none" stroke="#f8e8a0" stroke-width="0.6"/></svg>
<div class="t" id="folder" style="transform-origin:0 50%;transform:scaleX(0.952);left:32.4px;top:119.3px;width:143.9px;overflow:hidden;">K:\paso\Curso Basico HEC-HMS\Modulo_1\Delimita</div>
<div class="ex" style="left:23.3px;top:130.8px;"></div>
<div class="cb" style="left:32.1px;top:130.2px;"></div>
<svg style="left:32.1px;top:130.2px;" width="5.4" height="5.4" viewBox="0 0 5.4 5.4"><path d="M1.25 2.75 L2.3 3.85 L4.25 1.4" stroke="#000" stroke-width="0.95" fill="none" stroke-linecap="square"/></svg>
<div class="t" id="l1" style="transform-origin:0 50%;transform:scaleX(0.948);left:41.7px;top:129.0px;">FlowAcc_flow1</div>
<div class="t" id="l1v" style="transform-origin:0 50%;transform:scaleX(0.950);left:51.4px;top:137.7px;">Valor</div>
<div class="t" id="l1a" style="transform-origin:0 50%;transform:scaleX(0.910);left:48.8px;top:145.2px;">Alto : 289796</div>
<div class="gr" style="left:39.7px;top:145.6px;height:18px;"></div>
<div class="t" id="l1b" style="transform-origin:0 50%;transform:scaleX(0.901);left:48.8px;top:163.3px;">Bajo : 0</div>
<div class="ex" style="left:23.3px;top:184.9px;"></div>
<div class="cb" style="left:32.1px;top:184.3px;"></div>
<svg style="left:32.1px;top:184.3px;" width="5.4" height="5.4" viewBox="0 0 5.4 5.4"><path d="M1.25 2.75 L2.3 3.85 L4.25 1.4" stroke="#000" stroke-width="0.95" fill="none" stroke-linecap="square"/></svg>
<div class="t" id="l2" style="transform-origin:0 50%;transform:scaleX(0.935);left:41.7px;top:183.1px;">FlowDir_fill1</div>
<div class="sw" style="left:39.8px;top:193.6px;background:#f4f6e4;border:0.5px solid #9c9c9c;box-sizing:border-box;"></div>
<div class="t" id="d0" style="transform-origin:0 50%;transform:scaleX(0.950);left:48.8px;top:192.2px;">1</div>
<div class="sw" style="left:39.8px;top:202.5px;background:#1428c8;border:0.4px solid #1428c8;box-sizing:border-box;"></div>
<div class="t" id="d1" style="transform-origin:0 50%;transform:scaleX(0.950);left:48.8px;top:201.1px;">2</div>
<div class="sw" style="left:39.8px;top:211.4px;background:#38e838;border:0.4px solid #38e838;box-sizing:border-box;"></div>
<div class="t" id="d2" style="transform-origin:0 50%;transform:scaleX(0.950);left:48.8px;top:210.0px;">4</div>
<div class="sw" style="left:39.8px;top:220.5px;background:#6a0a14;border:0.4px solid #6a0a14;box-sizing:border-box;"></div>
<div class="t" id="d3" style="transform-origin:0 50%;transform:scaleX(0.950);left:48.8px;top:219.1px;">8</div>
<div class="sw" style="left:39.8px;top:229.4px;background:#d82890;border:0.4px solid #d82890;box-sizing:border-box;"></div>
<div class="t" id="d4" style="transform-origin:0 50%;transform:scaleX(0.842);left:48.8px;top:228.0px;">16</div>
<div class="sw" style="left:39.8px;top:238.4px;background:#3a4a10;border:0.4px solid #3a4a10;box-sizing:border-box;"></div>
<div class="t" id="d5" style="transform-origin:0 50%;transform:scaleX(0.842);left:48.8px;top:237.0px;">32</div>
<div class="sw" style="left:39.8px;top:247.5px;background:#1c2448;border:0.4px solid #1c2448;box-sizing:border-box;"></div>
<div class="t" id="d6" style="transform-origin:0 50%;transform:scaleX(0.842);left:48.8px;top:246.1px;">64</div>
<div class="sw" style="left:39.8px;top:256.6px;background:#48f0c0;border:0.4px solid #48c8a8;box-sizing:border-box;"></div>
<div class="t" id="d7" style="transform-origin:0 50%;transform:scaleX(0.852);left:48.8px;top:255.2px;">128</div>
<div class="ex" style="left:23.3px;top:266.0px;"></div>
<div class="cb" style="left:32.1px;top:265.4px;"></div>
<div class="t" id="l3" style="transform-origin:0 50%;transform:scaleX(0.934);left:41.7px;top:264.2px;">Fill_asc1</div>
<div class="t" id="l3v" style="transform-origin:0 50%;transform:scaleX(0.950);left:51.4px;top:272.9px;">Valor</div>
<div class="t" id="l3a" style="transform-origin:0 50%;transform:scaleX(0.906);left:48.8px;top:280.4px;">Alto : 709,581</div>
<div class="gr" style="left:39.7px;top:280.8px;height:18px;"></div>
<div class="t" id="l3b" style="transform-origin:0 50%;transform:scaleX(0.867);left:48.8px;top:298.5px;">Bajo : 146,171</div>
<div class="ex" style="left:23.3px;top:320.5px;"></div>
<div class="cb" style="left:32.1px;top:319.9px;"></div>
<div class="t" id="l4" style="transform-origin:0 50%;transform:scaleX(0.925);left:41.7px;top:318.7px;">MDT25-0966-H30.asc</div>
<div class="t" id="l4v" style="transform-origin:0 50%;transform:scaleX(0.950);left:51.4px;top:327.4px;">Valor</div>
<div class="t" id="l4a" style="transform-origin:0 50%;transform:scaleX(0.906);left:48.8px;top:334.9px;">Alto : 636,516</div>
<div class="gr" style="left:39.7px;top:335.3px;height:18px;"></div>
<div class="t" id="l4b" style="transform-origin:0 50%;transform:scaleX(0.867);left:48.8px;top:353.0px;">Bajo : 155,767</div>
<div class="ex" style="left:23.3px;top:374.8px;"></div>
<div class="cb" style="left:32.1px;top:374.2px;"></div>
<div class="t" id="l5" style="transform-origin:0 50%;transform:scaleX(0.881);left:41.7px;top:373.0px;">PNOA_MA_OF_ETRS89_HU30_h50_0966.ecw</div>
<div class="t" id="rgb" style="transform-origin:0 50%;transform:scaleX(0.950);left:51.4px;top:381.8px;">RGB</div>
<div class="sw" style="left:39.8px;top:392.3px;background:#e81818;border:0.4px solid #e81818;box-sizing:border-box;"></div>
<div class="t" id="r1" style="transform-origin:0 50%;transform:scaleX(0.950);left:48.8px;top:390.9px;">Rojo:</div>
<div class="t" id="r1b" style="transform-origin:0 50%;transform:scaleX(0.950);left:68.2px;top:390.9px;">Band_1</div>
<div class="sw" style="left:39.8px;top:401.3px;background:#28e838;border:0.4px solid #28e838;box-sizing:border-box;"></div>
<div class="t" id="r2" style="transform-origin:0 50%;transform:scaleX(0.950);left:48.8px;top:399.9px;">Verde:</div>
<div class="t" id="r2b" style="transform-origin:0 50%;transform:scaleX(0.950);left:67px;top:399.9px;">Band_2</div>
<div class="sw" style="left:39.8px;top:410.5px;background:#1010e0;border:0.4px solid #1010e0;box-sizing:border-box;"></div>
<div class="t" id="r3" style="transform-origin:0 50%;transform:scaleX(0.950);left:48.8px;top:409.1px;">Azul:</div>
<div class="t" id="r3b" style="transform-origin:0 50%;transform:scaleX(0.950);left:66.2px;top:409.1px;">Band_3</div>

<div class="a" style="left:182px;top:50px;width:0.9px;height:393.6px;background:#8a8e94;"></div>
<!-- ===== RESULTS PANEL ===== -->

<div class="a" style="left:184.5px;top:51px;width:174px;height:299.9px;border:0.9px solid #b4b9c2;border-right-color:#a4a6aa;box-sizing:border-box;background:#fff;"></div>
<div class="a" style="left:185.2px;top:51.6px;width:172.6px;height:1.4px;background:#dfe9f5;"></div>
<div class="a" style="left:185.2px;top:52.8px;width:172.6px;height:8.5px;background:linear-gradient(#7f9fc8 0,#93b3dc 10%,#98b7de 40%,#a4c0e4 100%);"></div>
<div class="t" id="reshdr" style="transform-origin:0 50%;transform:scaleX(0.927);left:187.2px;top:53px;color:#0c1c34;">Resultados</div>
<svg style="left:0;top:0" width="843" height="475" viewBox="0 0 843 475">
<rect x="342.6" y="54.6" width="3.8" height="3.8" fill="none" stroke="#1a2a44" stroke-width="0.8"/>
<path d="M351 54.8 l3.2 3.4 M354.2 54.8 l-3.2 3.4" stroke="#1a2a44" stroke-width="0.9"/>
<defs>
<g id="err"><circle r="3.5" fill="#d8262c" stroke="#8a1014" stroke-width="0.5"/><circle r="3.5" cy="-1.2" fill="#f08a8a" opacity="0.45" clip-path="circle(3.4px at 0 1.2px)"/><path d="M-1.5 -1.5 L1.5 1.5 M1.5 -1.5 L-1.5 1.5" stroke="#fff" stroke-width="1.1"/></g>
<g id="msg"><path d="M-3 -3 H3 Q3.4 -3 3.4 -2.6 V1.4 Q3.4 1.8 3 1.8 H0.2 L-1.4 3.4 V1.8 H-3 Q-3.4 1.8 -3.4 1.4 V-2.6 Q-3.4 -3 -3 -3 Z" fill="#f4f8ff" stroke="#3a6ac0" stroke-width="0.6"/><path d="M0 -0.8 V0.9 M0 -2 v0.5" stroke="#2a5ab8" stroke-width="0.8"/></g>
<g id="ses"><rect x="-3.2" y="-2.8" width="4.6" height="3.6" fill="#5a7aa8" stroke="#1a2a48" stroke-width="0.5"/><rect x="-1.4" y="-1" width="4.6" height="3.6" fill="#e8eef8" stroke="#1a2a48" stroke-width="0.5"/><rect x="-1.4" y="-1" width="4.6" height="1.1" fill="#3a5a90"/></g>
</defs>
<use href="#ses" x="195.6" y="67.8"/>
<use href="#err" x="204.8" y="76.8"/>
<g transform="translate(214,86.2)"><path d="M-3 -2.6 H3 V1.6 Q0 3 -3 1.6 Z" fill="#fff" stroke="#444" stroke-width="0.6"/><path d="M-3 1.8 Q0 3.4 3 1.8" stroke="#8a4a2a" stroke-width="0.7" fill="none"/></g>
<g transform="translate(214.2,94.8)"><path d="M0 -3.3 L3.4 0 L0 3.3 L-3.4 0 Z" fill="#4aa0d8" stroke="#1a4a80" stroke-width="0.5"/><path d="M0 -3.3 L3.4 0 L0 0.6 L-3.4 0 Z" fill="#8ac8f0"/></g>
<g transform="translate(214,104)"><rect x="-3" y="-1.4" width="5.4" height="4.2" fill="#f0e4c0" stroke="#6a5a3a" stroke-width="0.5"/><path d="M-1 -1.4 L1 -3.2 L3.2 -2" fill="none" stroke="#8a5a2a" stroke-width="0.7"/><rect x="1.6" y="-3.2" width="1.8" height="1.8" fill="#d88a3a"/></g>
<use href="#msg" x="214" y="113.2"/>
<use href="#msg" x="224" y="122"/>
<use href="#msg" x="224" y="131.2"/>
<use href="#msg" x="224" y="140.3"/>
<use href="#err" x="224" y="149.4"/>
<use href="#err" x="224" y="158.5"/>
<use href="#err" x="224" y="167.6"/>
<use href="#err" x="224" y="176.7"/>
<use href="#err" x="224" y="185.8"/>
<use href="#err" x="224" y="194.9"/>
<use href="#err" x="224" y="204"/>
<use href="#msg" x="224" y="213"/>
<use href="#ses" x="195.6" y="222"/>
<use href="#ses" x="195.6" y="231"/>
</svg>
<div class="ex" style="left:185.9px;top:65.6px;"></div>
<div class="t" id="s1" style="transform-origin:0 50%;transform:scaleX(0.923);left:202.5px;top:63.8px;">Sesión actual</div>
<div class="ex" style="left:193.8px;top:74.6px;"></div>
<div class="a" style="left:210.8px;top:72.9px;width:95.6px;height:7.9px;background:#3286e6;"></div>
<div class="t" id="s2" style="transform-origin:0 50%;transform:scaleX(0.920);left:211.8px;top:72.8px;color:#d4e6ff;">RasterCalculator [085928_11172013]</div>
<div class="t" id="s3" style="transform-origin:0 50%;transform:scaleX(0.918);left:221.7px;top:82.0px;">Ráster de salida: &lt;vacío&gt;</div>
<div class="ex pl" style="left:203.3px;top:92.6px;"></div>
<div class="t" id="s4" style="transform-origin:0 50%;transform:scaleX(0.901);left:221.7px;top:90.8px;">Entradas</div>
<div class="ex pl" style="left:203.3px;top:101.7px;"></div>
<div class="t" id="s5" style="transform-origin:0 50%;transform:scaleX(0.901);left:221.7px;top:99.9px;">Entornos</div>
<div class="ex" style="left:203.3px;top:110.9px;"></div>
<div class="t" id="s6" style="transform-origin:0 50%;transform:scaleX(0.922);left:221.7px;top:109.1px;">Mensajes</div>
<div class="t" id="g0" style="transform-origin:0 50%;transform:scaleX(0.945);left:231px;top:117.9px;width:133.7px;overflow:hidden;">Ejecutando: RasterCalculator "stream = con([FlowAcc_flow1] &gt; 500, 1)"</div>
<div class="t" id="g1" style="transform-origin:0 50%;transform:scaleX(0.926);left:231px;top:127.2px;width:136.4px;overflow:hidden;">Tiempo de Inicio: Sun Nov 17 08:59:27 2013</div>
<div class="t" id="g2" style="transform-origin:0 50%;transform:scaleX(0.961);left:231px;top:136.2px;width:131.4px;overflow:hidden;">stream = con([FlowAcc_flow1] &gt; 500, 1)</div>
<div class="t" id="g3" style="transform-origin:0 50%;transform:scaleX(0.935);left:231px;top:145.3px;width:135.1px;overflow:hidden;">ERROR <span style="color:#1a3ad0;text-decoration:underline;">000539</span>: Error running expression: rcexec()</div>
<div class="t" id="g4" style="transform-origin:0 50%;transform:scaleX(0.954);left:231px;top:154.4px;width:132.4px;overflow:hidden;">Traceback (most recent call last):</div>
<div class="t" id="g5" style="transform-origin:0 50%;transform:scaleX(0.970);left:231px;top:163.5px;width:130.2px;overflow:hidden;">&nbsp; File "&lt;expression&gt;", line 1, in &lt;module&gt;</div>
<div class="t" id="g6" style="transform-origin:0 50%;transform:scaleX(0.972);left:231px;top:172.6px;width:129.9px;overflow:hidden;">&nbsp; File "&lt;string&gt;", line 5, in rcexec</div>
<div class="t" id="g7" style="transform-origin:0 50%;transform:scaleX(0.968);left:231px;top:181.7px;width:130.5px;overflow:hidden;">NameError: name 'con' is not defined</div>
<div class="t" id="g8" style="left:231px;top:190.8px;width:126.3px;overflow:hidden;"></div>
<div class="t" id="g9" style="transform-origin:0 50%;transform:scaleX(0.934);left:231px;top:199.9px;width:135.2px;overflow:hidden;">Falló al ejecutar (RasterCalculator).</div>
<div class="t" id="g10" style="transform-origin:0 50%;transform:scaleX(0.940);left:231px;top:209.0px;width:134.4px;overflow:hidden;">Error en Sun Nov 17 08:59:28 2013 (Tiempo transcurrido: 1,00 segundos)</div>
<div class="ex" style="left:185.9px;top:219.8px;"></div>
<div class="t" id="s7" style="transform-origin:0 50%;transform:scaleX(0.947);left:202.5px;top:218.0px;">Sesión anterior</div>
<div class="t" id="s8" style="transform-origin:0 50%;transform:scaleX(0.978);left:202.5px;top:227.0px;">Compartidos</div>
<div class="a" style="left:185.4px;top:340.4px;width:172.2px;height:9.4px;background:linear-gradient(#e6e6e6,#f4f4f4 50%,#f6f6f6);"></div>
<div class="a" style="left:197.4px;top:340.9px;width:72px;height:8.4px;background:linear-gradient(#f4f4f4,#dcdcdc 50%,#cecece);border:0.5px solid #a6a6a6;border-radius:1px;box-sizing:border-box;"></div>
<div class="a" style="left:231.8px;top:343.7px;width:0.5px;height:2.8px;background:#9c9c9c;box-shadow:1px 0 0 #9c9c9c,2px 0 0 #9c9c9c;"></div>
<svg style="left:0;top:0" width="843" height="475" viewBox="0 0 843 475"><path d="M190.6 343.8 L190.6 346.4 L189 345.1 Z M351.4 343.8 L351.4 346.4 L353 345.1 Z" fill="#333"/></svg>


<!-- ===== STATUS BAR ===== -->
<div class="a" id="statusbar" style="left:0;top:444px;width:843px;height:11.5px;background:linear-gradient(#f8f8f8,#f3f3f5 40%,#eeeef2);"></div>

<!-- ===== TASKBAR ===== -->
<div class="a" id="taskbar" style="left:0;top:455px;width:843px;height:20px;background:linear-gradient(#7f9cc0 0,#9ab8dc 8%,#a3c0e3 50%,#9dbbe0 100%);"></div>


<!-- taskbar contents -->
<div class="a" style="left:620px;top:456px;width:223px;height:19px;background:linear-gradient(90deg,rgba(96,124,164,0) 0,rgba(96,124,164,0.75) 36%,rgba(92,120,160,0.85) 100%);"></div>
<div class="a" style="left:0;top:454.7px;width:843px;height:0.7px;background:#6a84a2;"></div>
<div class="a" style="left:0;top:455.4px;width:843px;height:0.6px;background:#c8dcf2;"></div>
<svg style="left:0;top:0" width="843" height="475" viewBox="0 0 843 475">
<defs>
<radialGradient id="orb" cx="50%" cy="40%" r="60%"><stop offset="0" stop-color="#8fd0f8"/><stop offset="0.6" stop-color="#2a78c0"/><stop offset="1" stop-color="#123a70"/></radialGradient>
<linearGradient id="tbtn" x1="0" y1="0" x2="0" y2="1"><stop offset="0" stop-color="#dce8f8" stop-opacity="0.85"/><stop offset="0.5" stop-color="#c4d6ee" stop-opacity="0.8"/><stop offset="1" stop-color="#b4cae8" stop-opacity="0.8"/></linearGradient>
</defs>
<!-- orb -->
<circle cx="13.7" cy="465.6" r="8.6" fill="url(#orb)" stroke="#2a4a70" stroke-width="0.6"/>
<path d="M9.8 461.8 Q11.6 461 13.2 461.8 L12.6 465 Q11 464.4 9.4 465 Z" fill="#e8502a"/>
<path d="M14 462 Q15.8 462.8 17.6 462 L17.2 465.2 Q15.4 466 13.5 465.2 Z" fill="#7ac030"/>
<path d="M9.2 465.8 Q10.8 465.2 12.4 465.8 L11.8 469 Q10.2 468.4 8.8 469 Z" fill="#3a9ae8"/>
<path d="M13.3 466 Q15 466.8 17 466 L16.6 469.2 Q14.8 470 12.8 469.2 Z" fill="#f4c020"/>
<!-- explorer -->
<g transform="translate(45,465.6)"><path d="M-7 -5 H-2 L-1 -3.6 H6 V5 H-7 Z" fill="#f0dc8c" stroke="#b09a4a" stroke-width="0.5"/><path d="M-7 5 L-6 -1.6 H7 L6 5 Z" fill="#fbf0b8" stroke="#b09a4a" stroke-width="0.5"/><rect x="-4.6" y="0.6" width="9" height="3" fill="#7ac8f0" opacity="0.8"/></g>
<!-- wmp -->
<g transform="translate(74,465.6)"><rect x="-5" y="-5" width="10" height="10" rx="1.5" fill="#d8e8f8" opacity="0.7"/><circle r="3.8" fill="#f08020" stroke="#a04a10" stroke-width="0.5"/><path d="M-1.2 -2 L2 0 L-1.2 2 Z" fill="#fff"/></g>
<!-- floppy (active) -->
<rect x="92.2" y="456.6" width="29" height="18.4" rx="1.2" fill="url(#tbtn)" stroke="#6a86a8" stroke-width="0.6"/>
<g transform="translate(107,465.8)"><path d="M-7 -7.4 H6 L7.4 -6 V7.4 H-7 Z" fill="#1a3a9a" stroke="#0a1a50" stroke-width="0.5"/><rect x="-4" y="-7.4" width="8" height="5" fill="#e8ecf4"/><rect x="1.4" y="-6.6" width="1.8" height="3.4" fill="#1a3a9a"/><rect x="-5" y="0" width="10" height="7.4" fill="#f8f8f8"/><path d="M-4 2 h8 M-4 4 h8 M-4 6 h8" stroke="#c84a4a" stroke-width="0.8"/></g>
<!-- firefox -->
<rect x="124" y="456.6" width="28.6" height="18.4" rx="1.2" fill="url(#tbtn)" stroke="#6a86a8" stroke-width="0.6"/>
<g transform="translate(138,465.8)"><circle r="7" fill="#e8701a" stroke="#9a3a0a" stroke-width="0.4"/><circle cx="-0.4" cy="-1" r="4.4" fill="#2a58b8"/><path d="M-7 0 Q-6 5 -1 6.6 Q4 7.4 6.6 2.4 Q4 4.6 0.6 3.6 Q-3 2.4 -2.4 -1 Q-4 -2 -5 -4.4 Q-7 -2.4 -7 0 Z" fill="#f4a020"/></g>
<!-- outlook -->
<g transform="translate(169,465.6)"><rect x="-6" y="-6.6" width="12" height="13.2" rx="1" fill="#f0b028" stroke="#b07a10" stroke-width="0.5"/><rect x="-3.6" y="-4" width="7.2" height="8" fill="#fbe8a8"/><path d="M-1.8 -1.4 a1.8 2.2 0 1 0 3.6 0 a1.8 2.2 0 1 0 -3.6 0" fill="none" stroke="#d08010" stroke-width="1.2"/></g>
<!-- word -->
<rect x="185.8" y="456.6" width="29" height="18.4" rx="1.2" fill="url(#tbtn)" stroke="#6a86a8" stroke-width="0.6"/>
<g transform="translate(200.2,465.8)"><rect x="-7" y="-7" width="14" height="14" fill="#f4f8fc" stroke="#2a4a9a" stroke-width="0.7"/><rect x="-7" y="-5" width="9" height="10" fill="#2a52b0"/><path d="M-5.6 -2.6 L-4.2 2.8 L-2.6 -1.4 L-1 2.8 L0.6 -2.6" stroke="#fff" stroke-width="1.1" fill="none"/><path d="M3 -3.6 h3 M3 -1.2 h3 M3 1.2 h3 M3 3.6 h3" stroke="#8aa0d0" stroke-width="0.6"/></g>
<!-- pdf -->
<rect x="217" y="456.6" width="29" height="18.4" rx="1.2" fill="url(#tbtn)" stroke="#6a86a8" stroke-width="0.6"/>
<g transform="translate(231.4,465.8)"><rect x="-6.4" y="-7.2" width="12.8" height="14.4" fill="#f8f8f8" stroke="#8a2a2a" stroke-width="0.6"/><path d="M-4 4.6 Q-1 1 0 -4.6 Q0.4 -6 -0.6 -5 Q-1 -1 4.6 2 Q2 1.4 -4 4.6 Z" fill="none" stroke="#d02020" stroke-width="1.1"/></g>
<!-- arcmap -->
<rect x="248.2" y="456.6" width="29" height="18.4" rx="1.2" fill="url(#tbtn)" stroke="#6a86a8" stroke-width="0.6"/>
<g transform="translate(262.6,465.6)"><circle cx="-0.6" cy="-0.6" r="6.8" fill="#1a6a7a" stroke="#0a2a3a" stroke-width="0.6"/><circle cx="-1.2" cy="-1.2" r="4" fill="#7ad0e8" stroke="#0a3a4a" stroke-width="0.8"/><path d="M-3.4 -2 Q-1 -4 1 -2.4 Q0 0 -2.4 0.6 Z" fill="#58b058"/><path d="M2 2 L6.6 6.8" stroke="#c86a20" stroke-width="1.8"/></g>
<!-- tray -->
<path d="M703.6 459 l1.2 1.2 l-1.2 1.2 M705.6 459 l1.2 1.2 l-1.2 1.2" stroke="#fff" stroke-width="0.5" fill="none"/>
<path d="M713.6 466 L716.6 466 L715.1 464.2 Z" fill="#fff"/>
<g transform="translate(726.4,465.4)"><path d="M-2.6 -3 V3.2" stroke="#fff" stroke-width="0.7"/><path d="M-2.6 -3 Q-0.6 -4 1 -3 Q2.4 -2.2 3.4 -3 V0.4 Q2.4 1.2 1 0.4 Q-0.6 -0.6 -2.6 0.4 Z" fill="#fff"/></g>
<g transform="translate(738.9,465.4)"><rect x="-3" y="-3.4" width="6" height="6.8" fill="#c81818"/><path d="M-1 -2.4 L1.4 -0.4 L-0.6 0.6 L1 2.6" stroke="#fff" stroke-width="0.8" fill="none"/></g>
<path d="M747.4 468.4 L756.6 468.4 L756.6 462.4 Z" fill="#c8d4e0" stroke="#eef4fa" stroke-width="0.5"/>
<g transform="translate(762.5,465.4)"><path d="M-3 -1.2 H-1.4 L1 -3.4 V3.4 L-1.4 1.2 H-3 Z" fill="#fff"/><path d="M2.2 -1.6 Q3.4 0 2.2 1.6" stroke="#fff" stroke-width="0.6" fill="none"/></g>
<g transform="translate(776,465.4)"><rect x="-3.6" y="-3.4" width="7.2" height="6.8" rx="1" fill="#1a88d8"/><path d="M-2 -1 L0 2 L2 -1 M0 2 V-2.4" stroke="#e8f4ff" stroke-width="0.9" fill="none"/></g>
<g transform="translate(787.5,465.4)"><path d="M-1.4 -3.6 H1.4 L4 1 H1.2 Z" fill="#f4c020"/><path d="M-1.4 -3.6 L-4 1 L-2.6 3.4 L0 -1.2 Z" fill="#28a048"/><path d="M-2.6 3.4 H2.6 L4 1 H-1.2 Z" fill="#2a68d8"/></g>
<!-- show desktop -->
<rect x="836" y="456.4" width="7" height="18.6" fill="#b8cce6" stroke="#6a86a8" stroke-width="0.6" opacity="0.8"/>
</svg>
<div class="t" id="menus" style="transform-origin:0 50%;transform:scaleX(0.937);left:681.6px;top:461.3px;color:#f2f6fb;">Menus</div>
<div class="t" id="clock" style="left:800px;width:30px;text-align:center;top:456.6px;color:#fff;">8:59</div>
<div class="t" id="date" style="left:800px;width:30px;text-align:center;top:464.6px;color:#fff;">17/11/2013</div>

<!-- notification popup -->
<div class="a" id="popup" style="left:705.2px;top:430px;width:137.8px;height:25.4px;background:linear-gradient(#a9c3f0,#a4bff0 60%,#9fbcee);border-left:0.6px solid #7a96d8;box-sizing:border-box;"></div>
<div class="a" style="left:705.2px;top:430px;width:103px;height:4.9px;background:linear-gradient(#4a5aa4 0,#2a3a80 25%,#26367a 100%);"></div>
<div class="a" style="left:808.2px;top:430px;width:34.8px;height:0.8px;background:#8aa4dc;"></div>
<div class="t" id="coords" style="transform-origin:0 50%;transform:scaleX(0.905);left:724px;top:446.4px;color:#7c9bd6;">521,374&nbsp; 4162860,318 Metros</div>
<div class="t" id="poptxt" style="transform-origin:0 50%;transform:scaleX(0.909);left:737.6px;top:436.4px;font-weight:bold;color:#0a0f1e;">Calculadora ráster</div>
<svg style="left:0;top:0" width="843" height="475" viewBox="0 0 843 475">
<path d="M768 430.6 h10" stroke="#c8d8f8" stroke-width="0.6" stroke-dasharray="0.7 0.7"/>
<g transform="translate(731,440.4)"><circle r="3.7" fill="#e0383e" stroke="#f4b0b0" stroke-width="0.7"/><path d="M-1.5 -1.5 L1.5 1.5 M1.5 -1.5 L-1.5 1.5" stroke="#fff" stroke-width="1.1"/></g>
<path d="M834.4 436.6 l4 4.2 M838.4 436.6 l-4 4.2" stroke="#10182c" stroke-width="1.1"/>
<!-- hammer -->
<path d="M709 441 L713.5 436.6 L718.4 436.8 L715.4 438.8 L712 442.6 Z" fill="#5a6068" stroke="#2a2e36" stroke-width="0.4"/>
<path d="M714.4 439.6 L723.2 450.6" stroke="#9a8468" stroke-width="1.5"/>
<path d="M714.2 439.4 L723 450.4" stroke="#d8c8a8" stroke-width="0.5"/>
<path d="M708.4 446.4 a3.4 3.4 0 1 0 3.4 3.4" fill="none" stroke="#8ab0e8" stroke-width="1.2"/>
</svg>

</body>
</html>
